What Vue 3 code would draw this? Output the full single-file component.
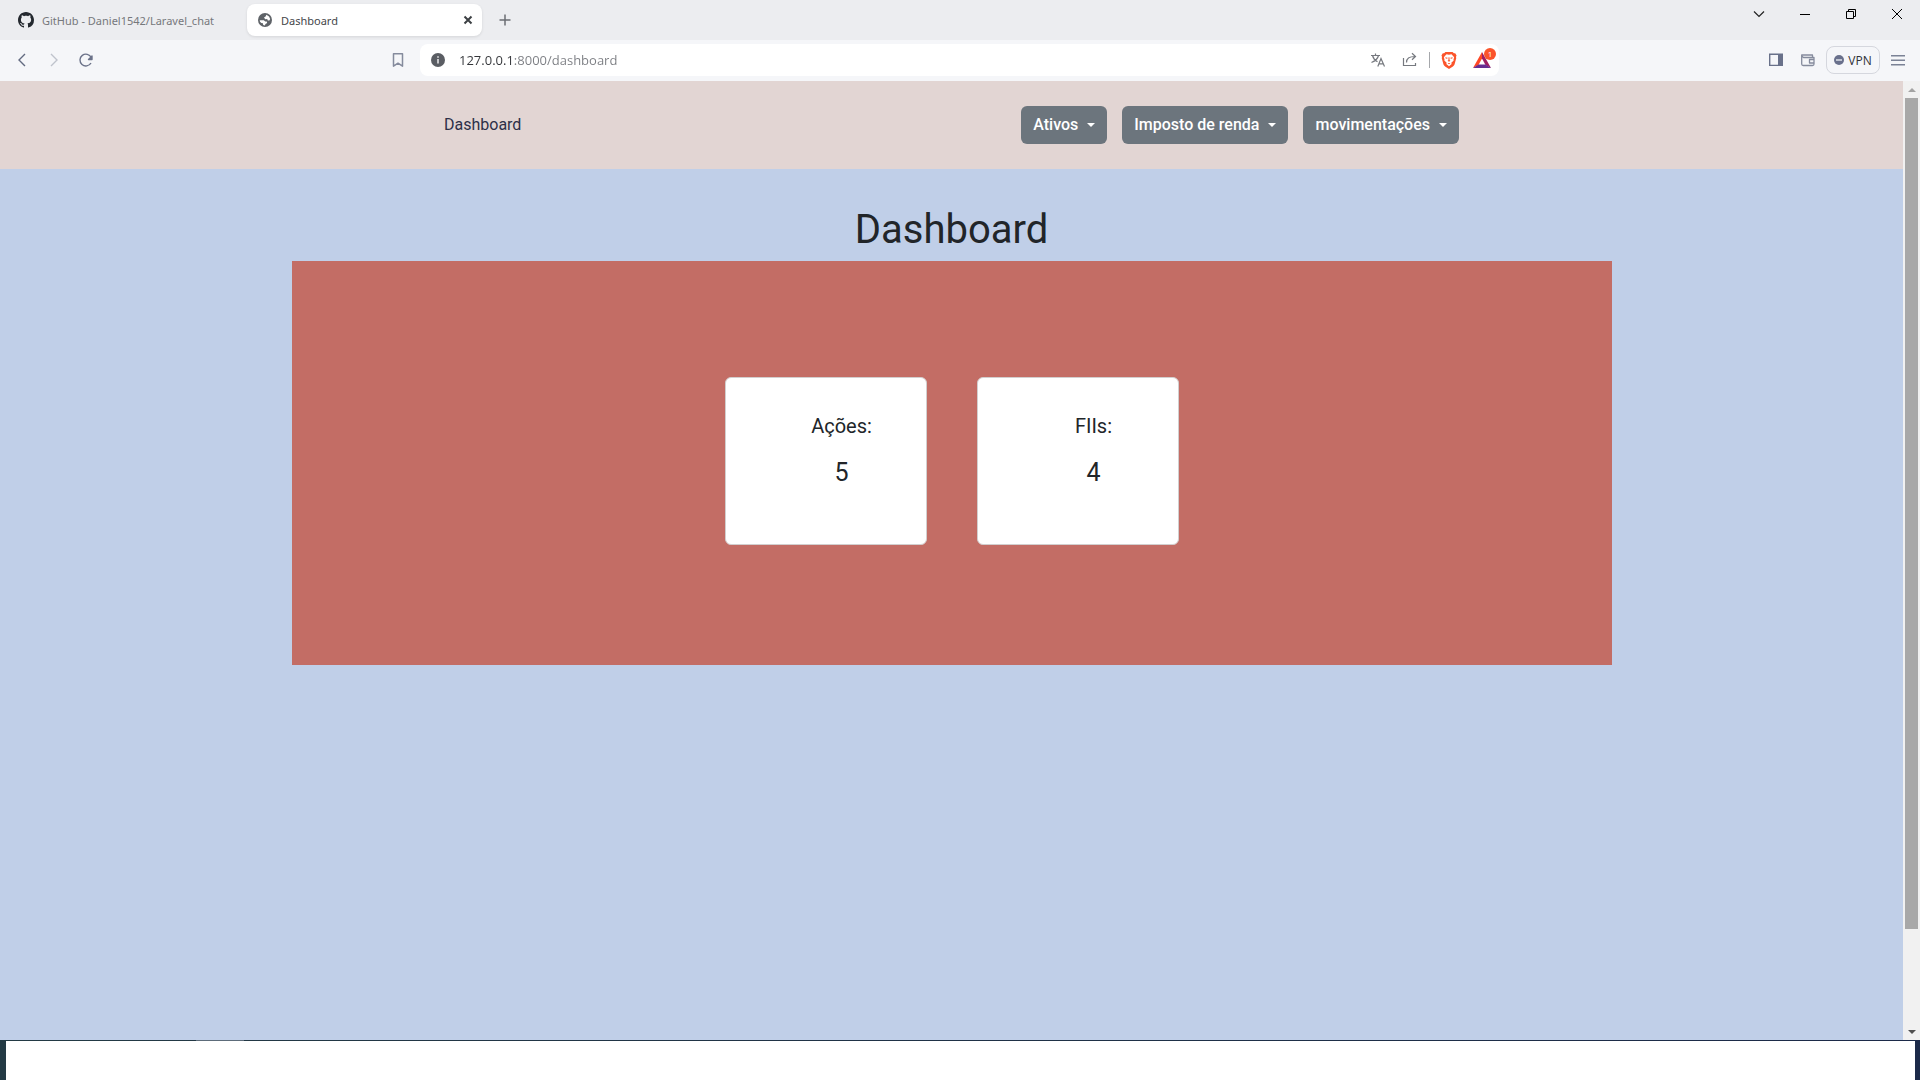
<script setup>
const menus = ['Ativos', 'Imposto de renda', 'movimentações']
const totals = [
  { label: 'Ações:', value: 5 },
  { label: 'FIIs:', value: 4 },
]
const address = '127.0.0.1:8000/dashboard'
</script>

<template>
  <div class="window">
    <header class="tabstrip">
      <div class="tab">
        <svg width="16" height="16" viewBox="0 0 16 16" fill="#24292f"><path d="M8 0C3.58 0 0 3.58 0 8c0 3.54 2.29 6.53 5.47 7.59.4.07.55-.17.55-.38 0-.19-.01-.82-.01-1.49-2.01.37-2.53-.49-2.69-.94-.09-.23-.48-.94-.82-1.13-.28-.15-.68-.52-.01-.53.63-.01 1.08.58 1.23.82.72 1.21 1.87.87 2.33.66.07-.52.28-.87.51-1.07-1.78-.2-3.64-.89-3.64-3.95 0-.87.31-1.59.82-2.15-.08-.2-.36-1.02.08-2.12 0 0 .67-.21 2.2.82.64-.18 1.32-.27 2-.27s1.36.09 2 .27c1.53-1.04 2.2-.82 2.2-.82.44 1.1.16 1.92.08 2.12.51.56.82 1.27.82 2.15 0 3.07-1.87 3.75-3.65 3.95.29.25.54.73.54 1.48 0 1.07-.01 1.93-.01 2.2 0 .21.15.46.55.38A8.01 8.01 0 0 0 16 8c0-4.42-3.58-8-8-8z" /></svg>
        <span>GitHub - Daniel1542/Laravel_chat</span>
      </div>
      <div class="tab active">
        <svg width="16" height="16" viewBox="0 0 16 16"><circle cx="8" cy="8" r="7" fill="#5f6368" /><path d="M9.4 2.8L12 4.4 13.2 7l-.8 1.6-1.6-.2-.6-1.4-2 .2L7 5.6l1.600-1zM2.700 8.200h4.100l1.400 1.400h1.600l.4 1.400-1.800 1-.4 1.500L6.200 13 5.900 11.300 4.300 10.900 3 9.700z" fill="#fff" /></svg>
        <span>Dashboard</span>
        <button class="icon small" aria-label="Fechar guia"><svg width="10" height="10" viewBox="0 0 10 10" stroke="#3c4043" stroke-width="2"><path d="M1.5 1.5l7 7M8.5 1.5l-7 7" /></svg></button>
      </div>
      <button class="icon new-tab" aria-label="Nova guia"><svg width="12" height="12" viewBox="0 0 12 12" stroke="#6b6e73" stroke-width="1.5"><path d="M6 .5v11M.5 6h11" /></svg></button>
      <div class="controls">
        <button class="icon" aria-label="Pesquisar guias"><svg width="12" height="12" viewBox="0 0 12 12" fill="none" stroke="#222" stroke-width="1.2"><path d="M1 3.5l5 5 5-5" /></svg></button>
        <button class="icon" aria-label="Minimizar"><svg width="10" height="10" viewBox="0 0 10 10" fill="#000"><path d="M0 5h10v1H0z" /></svg></button>
        <button class="icon" aria-label="Restaurar"><svg width="10" height="10" viewBox="0 0 10 10" fill="none" stroke="#000"><path d="M.5 2.5h7v7h-7zM2.5 2.5v-2h7v7h-2" /></svg></button>
        <button class="icon" aria-label="Fechar"><svg width="10" height="10" viewBox="0 0 10 10" stroke="#000"><path d="M0 0l10 10M10 0L0 10" /></svg></button>
      </div>
    </header>

    <div class="toolbar">
      <div class="group">
        <button class="icon" aria-label="Voltar"><svg width="16" height="16" viewBox="0 0 16 16" fill="none" stroke="#626a80" stroke-width="1.4"><path d="M11 2L5 8l6 6" /></svg></button>
        <button class="icon" aria-label="Avançar"><svg width="16" height="16" viewBox="0 0 16 16" fill="none" stroke="#bfc3cc" stroke-width="1.4"><path d="M5 2l6 6-6 6" /></svg></button>
        <button class="icon" aria-label="Recarregar"><svg width="16" height="16" viewBox="0 0 16 16" fill="none" stroke="#6b7289" stroke-width="1.4"><path d="M13 11A5.900 5.900 0 1 1 13.200 5.500" /><path d="M14 4v3.500H10.500z" fill="#6b7289" stroke-linejoin="round" /></svg></button>
      </div>
      <div class="location">
        <button class="icon" aria-label="Favoritos"><svg width="16" height="16" viewBox="0 0 16 16" fill="none" stroke="#858b9d" stroke-width="1.5" stroke-linejoin="round"><path d="M3.5 1.7h9v12.5L8 11.2l-4.500 3z" /></svg></button>
        <div class="address">
          <svg class="info" width="14" height="14" viewBox="0 0 14 14"><circle cx="7" cy="7" r="7" fill="#5a5d63" /><path d="M6.2 6h1.6v4.5H6.2zM6.2 3.3h1.6v1.5H6.2z" fill="#e4e4e6" /></svg>
          <input class="url" type="text" aria-label="Endereço" :value="address" />
          <button class="icon" aria-label="Traduzir"><svg width="16" height="16" viewBox="0 0 16 16" fill="none" stroke="#76797f" stroke-width="1.2"><path d="M1 3.5h9M5.5 1.5v2M2.5 3.5c.8 3 2.5 5 5 6.2M8.5 3.5c-.7 3.2-3.3 5.5-7 7M7.8 14.5l3.2-8 3.5 8M9 11.8h4.5" /></svg></button>
          <button class="icon" aria-label="Compartilhar"><svg width="16" height="16" viewBox="0 0 16 16" fill="none" stroke="#76797f" stroke-width="1.2"><path d="M1.5 6v7.5h12V11M4.5 10.5C4.5 6.5 7 4.5 13 4.5M10 1.3l3.5 3.2L10 7.8" /></svg></button>
          <span class="divider"></span>
          <button class="icon" aria-label="Brave Shields"><svg width="16" height="18" viewBox="0 0 18 20"><path d="M5 1h8l1.5 1.5 1.5-.2L17.500 5l-.7 1.5.4 1.2-2 7.5c-.3 1-1 1.6-1.8 2.2L9 20l-4.400-2.600c-.8-.6-1.500-1.200-1.800-2.200l-2-7.500.4-1.200L.5 5 2 2.300l1.500.2z" fill="#fb542b" /><path d="M6.200 3.600L9 4l2.800-.4 3 3.400-.8 2.600.3 1-2.700 2.400.4 1.400L9 17l-3-2.600.4-1.400-2.700-2.400.3-1L3.200 7z" fill="#fff" /><path d="M4.800 7l2.700.5-.5 1.200-1.700-.3zM13.200 7l-2.700.5.5 1.200 1.700-.3zM8.500 7h1l.2 3.200.9.700L9 12l-1.600-1.100.9-.7zM7.400 13.500h3.200L9 14.700z" fill="#fb542b" /></svg></button>
          <button class="icon rewards" aria-label="Brave Rewards"><svg width="18" height="16" viewBox="0 0 18 16"><path d="M9 0L0 16l5.5-3L9 6.5z" fill="#ff4724" /><path d="M9 0l9 16-5.5-3L9 6.5z" fill="#9e1f63" /><path d="M0 16h18l-5.500-3.500h-7z" fill="#662d91" /></svg><span class="badge">1</span></button>
        </div>
      </div>
      <div class="group end">
        <button class="icon" aria-label="Painel lateral"><svg width="16" height="16" viewBox="0 0 16 16"><path d="M1.7 2.2h12.6v11.2H1.7z" fill="none" stroke="#69718a" stroke-width="1.4" /><path d="M10 2h4v11h-4z" fill="#69718a" /></svg></button>
        <button class="icon" aria-label="Carteira"><svg width="16" height="16" viewBox="0 0 16 16" fill="none" stroke="#858b9d" stroke-width="1.3" stroke-linejoin="round"><path d="M12.5 5V3H1.7v9q0 1.5 1.5 1.5h9.3q1.5 0 1.5-1.5V5.5H3.5L1.7 4M14 7.500H9.500v3.500H14" /></svg></button>
        <button class="vpn"><svg width="10" height="10" viewBox="0 0 10 10"><circle cx="5" cy="5" r="5" fill="#69708c" /><path d="M2 4.3h6v1.4H2z" fill="#e6e8f0" /></svg>VPN</button>
        <button class="icon" aria-label="Menu"><svg width="14" height="12" viewBox="0 0 14 12" fill="#7b8296"><path d="M0 1h14v1.4H0zM0 5.5h14v1.4H0zM0 10h14v1.4H0z" /></svg></button>
      </div>
    </div>

    <div class="viewport">
      <div class="page">
        <nav class="navbar">
          <div class="navbar-inner">
            <a class="brand" href="#">Dashboard</a>
            <div class="menus">
              <button v-for="m in menus" :key="m" class="btn">{{ m }}</button>
            </div>
          </div>
        </nav>
        <main class="container">
          <h1>Dashboard</h1>
          <section class="panel">
            <article v-for="t in totals" :key="t.label" class="card">
              <p class="label">{{ t.label }}</p>
              <p class="value">{{ t.value }}</p>
            </article>
          </section>
        </main>
      </div>
      <div class="scrollbar">
        <span class="arrow up"></span>
        <div class="track"><div class="thumb"></div><div class="rest"></div></div>
        <span class="arrow down"></span>
      </div>
    </div>

    <footer class="desktop"><div class="sheet"></div></footer>
  </div>
</template>

<style>
body {
  margin: 0;
}
</style>

<style scoped>
* {
  box-sizing: border-box;
}
.window {
  min-height: 100vh;
  display: flex;
  flex-direction: column;
  font-family: "Open Sans", "Noto Sans", sans-serif;
}
button {
  font: inherit;
  border: 0;
  padding: 0;
  background: none;
}
svg {
  flex: none;
  display: block;
}
.icon {
  width: 32px;
  height: 32px;
  flex: none;
  display: flex;
  align-items: center;
  justify-content: center;
}
.tabstrip {
  height: 40px;
  display: flex;
  align-items: center;
  background: #ecedf0;
  font-family: "Noto Sans", "Open Sans", sans-serif;
  font-size: 11px;
}
.tab {
  width: 235px;
  height: 32px;
  margin-left: 8px;
  padding: 0 10px;
  display: flex;
  align-items: center;
  gap: 8px;
  color: #76787c;
  white-space: nowrap;
}
.tab.active {
  margin-left: 4px;
  padding-right: 3px;
  background: #fff;
  border-radius: 8px;
  box-shadow: 0 1px 3px rgba(0, 0, 0, 0.1);
  color: #44464a;
}
.small {
  width: 22px;
  margin-left: auto;
}
.new-tab {
  margin-left: 7px;
}
.controls {
  margin-left: auto;
  align-self: flex-start;
  display: flex;
}
.controls .icon {
  width: 46px;
  height: 28px;
}
.toolbar {
  height: 41px;
  padding-bottom: 1px;
  display: grid;
  grid-template-columns: 382px 1fr 160px;
  align-items: center;
  background: #f5f6f9;
}
.group {
  display: flex;
  align-items: center;
  padding-left: 6px;
}
.group.end {
  padding: 0;
}
.location {
  display: flex;
  align-items: center;
  gap: 6px;
  margin-right: 261px;
}
.address {
  flex: 1;
  min-width: 0;
  height: 32px;
  padding-left: 11px;
  display: flex;
  align-items: center;
  background: #fff;
  border-radius: 8px;
}
.url {
  flex: 1;
  min-width: 0;
  height: 32px;
  margin-left: 14px;
  padding: 0;
  border: 0;
  font: inherit;
  font-size: 13px;
  color: transparent;
  background: linear-gradient(to right, #333539 55px, #7b7d82 55px);
  -webkit-background-clip: text;
  background-clip: text;
}
.divider {
  width: 1px;
  height: 16px;
  margin: 0 3px;
  background: #a5a7ab;
}
.rewards {
  width: 34px;
  position: relative;
}
.badge {
  position: absolute;
  top: 4px;
  right: 3px;
  width: 12px;
  height: 12px;
  border-radius: 6px;
  background: #fb542b;
  color: #fff;
  font-size: 8px;
  line-height: 12px;
  text-align: center;
}
.vpn {
  width: 54px;
  height: 28px;
  margin: 0 2px;
  display: flex;
  align-items: center;
  justify-content: center;
  gap: 4px;
  border: 1px solid #d5d7de;
  border-radius: 8px;
  font-size: 12px;
  color: #303238;
}
.viewport {
  flex: 1;
  display: flex;
}
.page {
  flex: 1;
  min-width: 0;
  background: #c0cfe8;
  font-family: Roboto, sans-serif;
  font-size: 16px;
  line-height: 24px;
  color: #212529;
}
.navbar {
  padding: 25px 16px;
  background: #e2d5d3;
}
.navbar-inner {
  max-width: 1015px;
  margin: 0 auto;
  display: flex;
  align-items: center;
  justify-content: space-between;
}
.brand {
  color: #2d3048;
  text-decoration: none;
}
.menus {
  display: flex;
  gap: 15px;
}
.btn {
  height: 38px;
  padding: 0 12px;
  display: flex;
  align-items: center;
  gap: 9px;
  border-radius: 6px;
  background: #6c757d;
  color: #fff;
  font-weight: 500;
}
.btn::after {
  content: "";
  border: 4px solid transparent;
  border-top-color: #fff;
  border-bottom: 0;
}
.container {
  max-width: 1320px;
  margin: 0 auto;
  padding-top: 37px;
}
h1 {
  margin: 0 0 7px;
  font-size: 40px;
  line-height: 48px;
  font-weight: 400;
  text-align: center;
}
.panel {
  padding: 116px 16px 120px;
  display: flex;
  justify-content: center;
  gap: 50px;
  background: #c36d65;
}
.card {
  width: 202px;
  height: 168px;
  padding: 36px 0 0 32px;
  background: #fff;
  border: 1px solid #d2cfcf;
  border-radius: 6px;
  text-align: center;
}
.card p {
  margin: 0;
}
.label {
  font-size: 20px;
  line-height: 24px;
}
.card .value {
  margin-top: 17px;
  font-size: 25px;
  line-height: 36px;
}
.scrollbar {
  width: 17px;
  display: flex;
  flex-direction: column;
  background: #f1f1f1;
}
.arrow {
  height: 17px;
  display: flex;
  align-items: center;
  justify-content: center;
}
.arrow::after {
  content: "";
  border: 4px solid transparent;
}
.up::after {
  border-top: 0;
  border-bottom-color: #a3a3a3;
}
.down::after {
  border-bottom: 0;
  border-top-color: #505050;
}
.track {
  flex: 1;
  padding: 0 2px;
  display: flex;
  flex-direction: column;
}
.thumb {
  flex: 831;
  background: #a8a8a8;
}
.rest {
  flex: 94;
}
.desktop {
  height: 40px;
  padding: 1px 5px 0 6px;
  background:
    linear-gradient(#5d6c7a, #5d6c7a) 196px 0 / 48px 1px no-repeat,
    linear-gradient(to right, #233a44, #1c2a49);
}
.sheet {
  height: 39px;
  background: #fff;
}
</style>
